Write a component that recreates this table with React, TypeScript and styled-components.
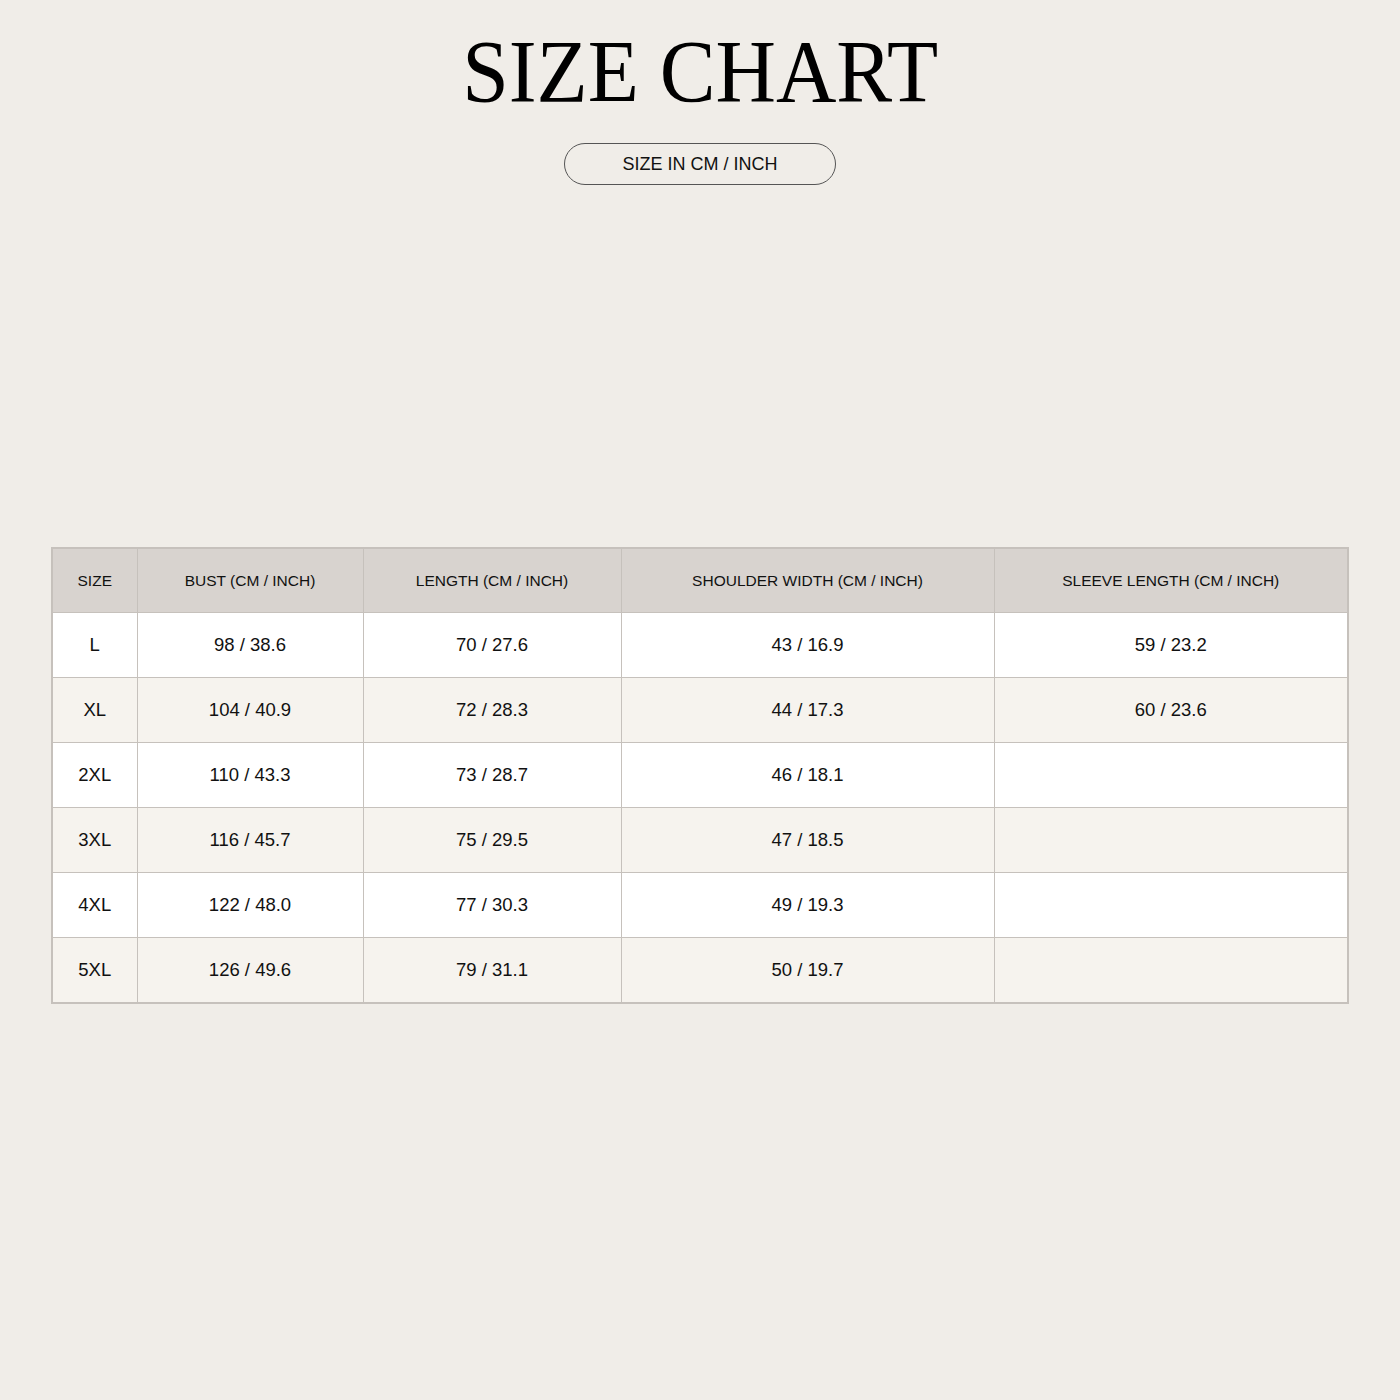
import React from 'react';
import styled, { createGlobalStyle } from 'styled-components';

const GlobalStyle = createGlobalStyle`
  html, body {
    margin: 0;
    padding: 0;
    background: #f0ede8;
  }
  body {
    font-family: 'Liberation Sans', Arial, sans-serif;
    color: #111;
  }
`;

const columns = [
  { label: 'SIZE', width: 85 },
  { label: 'BUST (CM / INCH)', width: 226 },
  { label: 'LENGTH (CM / INCH)', width: 258 },
  { label: 'SHOULDER WIDTH (CM / INCH)', width: 373 },
  { label: 'SLEEVE LENGTH (CM / INCH)', width: 354 },
];

const rows = [
  ['L', '98 / 38.6', '70 / 27.6', '43 / 16.9', '59 / 23.2'],
  ['XL', '104 / 40.9', '72 / 28.3', '44 / 17.3', '60 / 23.6'],
  ['2XL', '110 / 43.3', '73 / 28.7', '46 / 18.1', ''],
  ['3XL', '116 / 45.7', '75 / 29.5', '47 / 18.5', ''],
  ['4XL', '122 / 48.0', '77 / 30.3', '49 / 19.3', ''],
  ['5XL', '126 / 49.6', '79 / 31.1', '50 / 19.7', ''],
];

const App = () => {
  return (
    <Page>
      <GlobalStyle />
      <Header>
        <Title>SIZE CHART</Title>
        <UnitPill>SIZE IN CM / INCH</UnitPill>
      </Header>
      <Table>
        <colgroup>
          {columns.map((c) => (
            <col key={c.label} style={{ width: c.width }} />
          ))}
        </colgroup>
        <thead>
          <tr>
            {columns.map((c) => (
              <HeadCell key={c.label}>{c.label}</HeadCell>
            ))}
          </tr>
        </thead>
        <tbody>
          {rows.map((row, i) => (
            <Row key={row[0]} $alt={i % 2 === 1}>
              {row.map((value, j) => (
                <Cell key={j}>{value}</Cell>
              ))}
            </Row>
          ))}
        </tbody>
      </Table>
    </Page>
  );
};

const Page = styled.div`
  width: 1400px;
  min-height: 1400px;
  padding: 0 52px;
  box-sizing: border-box;
  display: flex;
  flex-direction: column;
  align-items: center;
`;

const Header = styled.header`
  display: flex;
  flex-direction: column;
  align-items: center;
  padding-top: 27px;
`;

const Title = styled.h1`
  margin: 0;
  font-family: 'Liberation Serif', 'Times New Roman', serif;
  font-weight: 400;
  font-size: 89px;
  line-height: 1;
  color: #000;
  transform: scaleX(0.94);
`;

const UnitPill = styled.div`
  margin-top: 27px;
  width: 272px;
  height: 42px;
  box-sizing: border-box;
  border: 1px solid #555;
  border-radius: 21px;
  display: flex;
  align-items: center;
  justify-content: center;
  font-size: 18px;
  color: #111;
`;

const Table = styled.table`
  margin-top: 362px;
  width: 1296px;
  table-layout: fixed;
  border-collapse: collapse;
  border: 2px solid #c6c1bc;
`;

const HeadCell = styled.th`
  height: 63px;
  padding: 0;
  background: #d8d3cf;
  border: 1px solid #c6c1bc;
  font-weight: 400;
  font-size: 15.5px;
  text-align: center;
  vertical-align: middle;
  color: #111;
`;

const Row = styled.tr<{ $alt: boolean }>`
  background: ${(p) => (p.$alt ? '#f6f3ee' : '#ffffff')};
`;

const Cell = styled.td`
  height: 64px;
  padding: 0;
  border: 1px solid #c6c1bc;
  font-size: 18.5px;
  text-align: center;
  vertical-align: middle;
  color: #111;
`;

export default App;
